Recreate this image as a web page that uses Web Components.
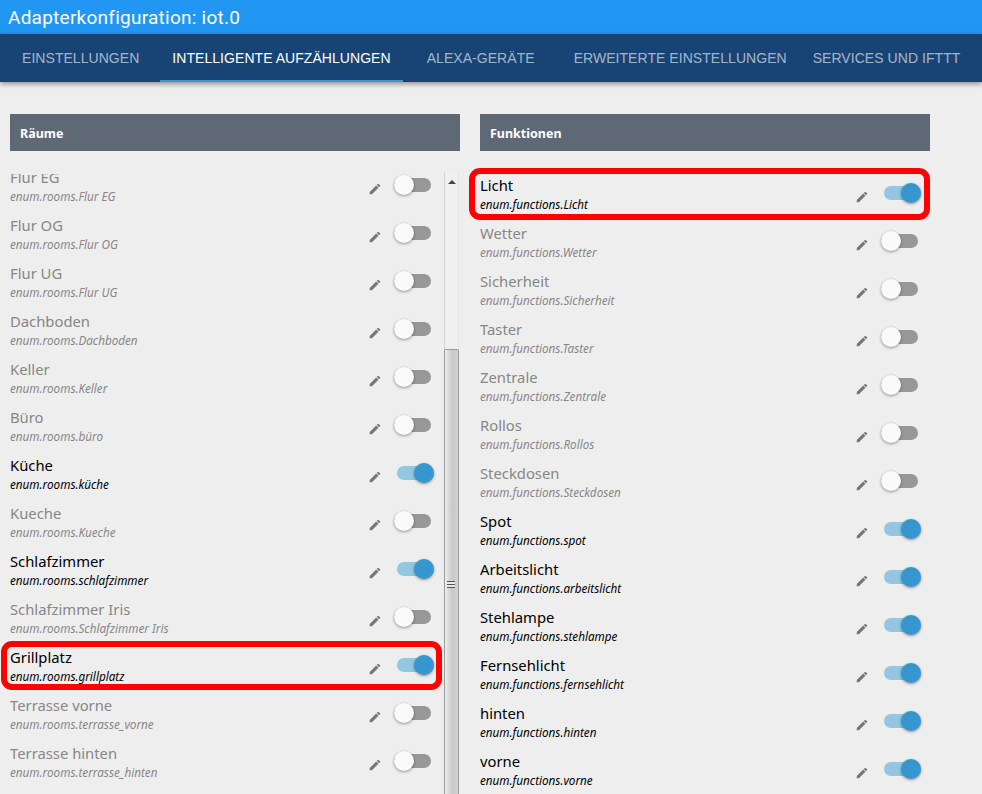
<!DOCTYPE html>
<html lang="de">
<head>
<meta charset="utf-8">
<title>Adapterkonfiguration: iot.0</title>
<style>
  html, body { margin: 0; height: 794px; overflow: hidden; background: #eee; }
  body { font-family: "Noto Sans", "Open Sans", sans-serif; }
</style>
</head>
<body>
<iot-app>
  <iot-tab slot="tabs" style="--gap: 9px">EINSTELLUNGEN</iot-tab>
  <iot-tab slot="tabs" style="--gap: 12px" active>INTELLIGENTE AUFZÄHLUNGEN</iot-tab>
  <iot-tab slot="tabs" style="--gap: 15px">ALEXA-GERÄTE</iot-tab>
  <iot-tab slot="tabs" style="--gap: 2px">ERWEITERTE EINSTELLUNGEN</iot-tab>
  <iot-tab slot="tabs" style="--gap: 0px">SERVICES UND IFTTT</iot-tab>

  <iot-panel slot="left" heading="Räume" scroll style="--row-end: 13px; --mark-top: 0px; --mark-height: 49px; --mark-left: -9px; --mark-right: 2px">
    <iot-row name="Flur EG" path="enum.rooms.Flur EG"></iot-row>
    <iot-row name="Flur OG" path="enum.rooms.Flur OG"></iot-row>
    <iot-row name="Flur UG" path="enum.rooms.Flur UG"></iot-row>
    <iot-row name="Dachboden" path="enum.rooms.Dachboden"></iot-row>
    <iot-row name="Keller" path="enum.rooms.Keller"></iot-row>
    <iot-row name="Büro" path="enum.rooms.büro"></iot-row>
    <iot-row name="Küche" path="enum.rooms.küche" on></iot-row>
    <iot-row name="Kueche" path="enum.rooms.Kueche"></iot-row>
    <iot-row name="Schlafzimmer" path="enum.rooms.schlafzimmer" on></iot-row>
    <iot-row name="Schlafzimmer Iris" path="enum.rooms.Schlafzimmer Iris"></iot-row>
    <iot-row name="Grillplatz" path="enum.rooms.grillplatz" on marked></iot-row>
    <iot-row name="Terrasse vorne" path="enum.rooms.terrasse_vorne"></iot-row>
    <iot-row name="Terrasse hinten" path="enum.rooms.terrasse_hinten"></iot-row>
  </iot-panel>

  <iot-panel slot="right" heading="Funktionen" style="--row-end: 12px; --mark-top: -1px; --mark-height: 52px; --mark-left: -11px; --mark-right: 0px">
    <iot-row name="Licht" path="enum.functions.Licht" on marked></iot-row>
    <iot-row name="Wetter" path="enum.functions.Wetter"></iot-row>
    <iot-row name="Sicherheit" path="enum.functions.Sicherheit"></iot-row>
    <iot-row name="Taster" path="enum.functions.Taster"></iot-row>
    <iot-row name="Zentrale" path="enum.functions.Zentrale"></iot-row>
    <iot-row name="Rollos" path="enum.functions.Rollos"></iot-row>
    <iot-row name="Steckdosen" path="enum.functions.Steckdosen"></iot-row>
    <iot-row name="Spot" path="enum.functions.spot" on></iot-row>
    <iot-row name="Arbeitslicht" path="enum.functions.arbeitslicht" on></iot-row>
    <iot-row name="Stehlampe" path="enum.functions.stehlampe" on></iot-row>
    <iot-row name="Fernsehlicht" path="enum.functions.fernsehlicht" on></iot-row>
    <iot-row name="hinten" path="enum.functions.hinten" on></iot-row>
    <iot-row name="vorne" path="enum.functions.vorne" on></iot-row>
  </iot-panel>
</iot-app>

<script>
class IotApp extends HTMLElement {
  constructor() {
    super();
    this.attachShadow({ mode: "open" });
    this.shadowRoot.innerHTML = `
      <style>
        :host { display: block; width: 982px; height: 794px; overflow: hidden; background: #eee; }
        .title {
          height: 34px; padding: 0 8px; background: #2196f3; color: #fff;
          font: 19px/36px Roboto, "Liberation Sans", sans-serif; letter-spacing: .25px;
        }
        .tabs {
          position: relative; display: flex; height: 48px; padding-left: 10px;
          background: #174475; box-shadow: 0 2px 5px rgba(0, 0, 0, .4);
        }
        .columns { display: flex; gap: 20px; padding: 32px 0 0 10px; }
      </style>
      <div class="title">Adapterkonfiguration: iot.0</div>
      <nav class="tabs"><slot name="tabs"></slot></nav>
      <div class="columns">
        <slot name="left"></slot>
        <slot name="right"></slot>
      </div>
    `;
  }
}

class IotTab extends HTMLElement {
  constructor() {
    super();
    this.attachShadow({ mode: "open" });
    this.shadowRoot.innerHTML = `
      <style>
        :host {
          display: block; box-sizing: border-box; height: 48px; padding: 0 12px; margin-right: var(--gap);
          color: rgba(255, 255, 255, .62); white-space: nowrap;
          font: 14px/48px "Liberation Sans", Arial, sans-serif; letter-spacing: .05px;
        }
        :host([active]) { color: #fff; border-bottom: 2px solid #3a97c9; }
      </style>
      <slot></slot>
    `;
  }
}

class IotPanel extends HTMLElement {
  constructor() {
    super();
    this.attachShadow({ mode: "open" });
    this.shadowRoot.innerHTML = `
      <style>
        :host { display: block; width: 450px; }
        h2 {
          margin: 0; height: 37px; padding-left: 10px; background: #5f6875; color: #fff;
          font: 700 12.5px/39px "Noto Sans", "Open Sans", sans-serif;
        }
        .body { display: flex; margin-top: 18px; }
        .rows { flex: 1; min-width: 0; }
        :host([scroll]) .body { margin-top: 21px; height: 622px; }
        :host([scroll]) .rows { margin-top: -11px; clip-path: inset(13px -20px 0 -20px); }
      </style>
      <h2></h2>
      <div class="body">
        <div class="rows"><slot></slot></div>
      </div>
    `;
    this.shadowRoot.querySelector("h2").textContent = this.getAttribute("heading");
    if (this.hasAttribute("scroll")) {
      this.shadowRoot.querySelector(".body").appendChild(document.createElement("iot-scrollbar"));
    }
  }
}

class IotRow extends HTMLElement {
  constructor() {
    super();
    this.attachShadow({ mode: "open" });
    const on = this.hasAttribute("on");
    this.shadowRoot.innerHTML = `
      <style>
        :host {
          position: relative; display: flex; align-items: center; height: 48px;
          color: #878787;
        }
        :host([on]) { color: #000; }
        .text { flex: 1; min-width: 0; white-space: nowrap; }
        .name { font: 14.8px/20px "Noto Sans", "Open Sans", sans-serif; }
        .path { font: italic 11.7px/16px "Noto Sans", "Open Sans", sans-serif; margin-top: 1px; }
        svg { width: 14px; height: 14px; fill: #757575; margin: 8px 12px 0 1px; }
        iot-toggle { margin-right: var(--row-end); }
        .mark {
          position: absolute; top: var(--mark-top); left: var(--mark-left); right: var(--mark-right);
          height: var(--mark-height); box-sizing: border-box;
          border: 6px solid #f00; border-radius: 11px; pointer-events: none;
        }
      </style>
      <div class="text">
        <div class="name"></div>
        <div class="path"></div>
      </div>
      <svg viewBox="0 0 24 24"><path d="M3 17.25V21h3.75L17.81 9.94l-3.75-3.75L3 17.25zM20.71 7.04a1 1 0 0 0 0-1.41l-2.34-2.34a1 1 0 0 0-1.41 0l-1.83 1.83 3.75 3.75 1.83-1.83z"/></svg>
      <iot-toggle ${on ? "on" : ""}></iot-toggle>
      ${this.hasAttribute("marked") ? '<div class="mark"></div>' : ""}
    `;
    this.shadowRoot.querySelector(".name").textContent = this.getAttribute("name");
    this.shadowRoot.querySelector(".path").textContent = this.getAttribute("path");
  }
}

class IotToggle extends HTMLElement {
  constructor() {
    super();
    this.attachShadow({ mode: "open" });
    this.shadowRoot.innerHTML = `
      <style>
        :host { position: relative; display: block; width: 37px; height: 20px; left: 0; }
        :host([on]) { left: 3px; }
        .track {
          position: absolute; left: 0; right: 0; top: 3px; height: 14px; border-radius: 7px; background: #989898;
        }
        :host([on]) .track { background: #92c6e1; }
        .thumb {
          position: absolute; left: 0; top: 0; width: 20px; height: 20px; border-radius: 50%;
          background: #fafafa; box-shadow: 0 1px 3px rgba(0, 0, 0, .4);
        }
        :host([on]) .thumb { left: 17px; background: #3597cf; }
      </style>
      <div class="track"></div>
      <div class="thumb"></div>
    `;
  }
}

class IotScrollbar extends HTMLElement {
  constructor() {
    super();
    this.attachShadow({ mode: "open" });
    this.shadowRoot.innerHTML = `
      <style>
        :host {
          display: flex; flex-direction: column; flex: none; box-sizing: border-box; width: 15px; height: 622px;
          margin-right: 1px; border-left: 1px solid #d4d4d4; border-right: 1px solid #e4e4e4; background: #f0f0f0;
        }
        .arrow {
          flex: none; width: 0; height: 0; margin: 8px auto 0;
          border: 4px solid transparent; border-top: 0; border-bottom: 4px solid #444;
        }
        .thumb {
          position: relative; flex: none; box-sizing: border-box; width: 15px; height: 445px; margin: 165px 0 0 -1px;
          border: 1px solid #9a9a9a; border-bottom: 0; border-radius: 2px 2px 0 0;
          background: linear-gradient(90deg, #eee 0, #d8d8d8 30%, #c8c8c8 60%, #d2d2d2 100%);
        }
        .grip {
          position: absolute; left: 2px; top: 231px; width: 8px; height: 7px;
          background: repeating-linear-gradient(#555 0 1px, #e8e8e8 1px 3px);
        }
      </style>
      <div class="arrow"></div>
      <div class="thumb"><div class="grip"></div></div>
    `;
  }
}

customElements.define("iot-app", IotApp);
customElements.define("iot-tab", IotTab);
customElements.define("iot-toggle", IotToggle);
customElements.define("iot-row", IotRow);
customElements.define("iot-scrollbar", IotScrollbar);
customElements.define("iot-panel", IotPanel);
</script>
</body>
</html>
